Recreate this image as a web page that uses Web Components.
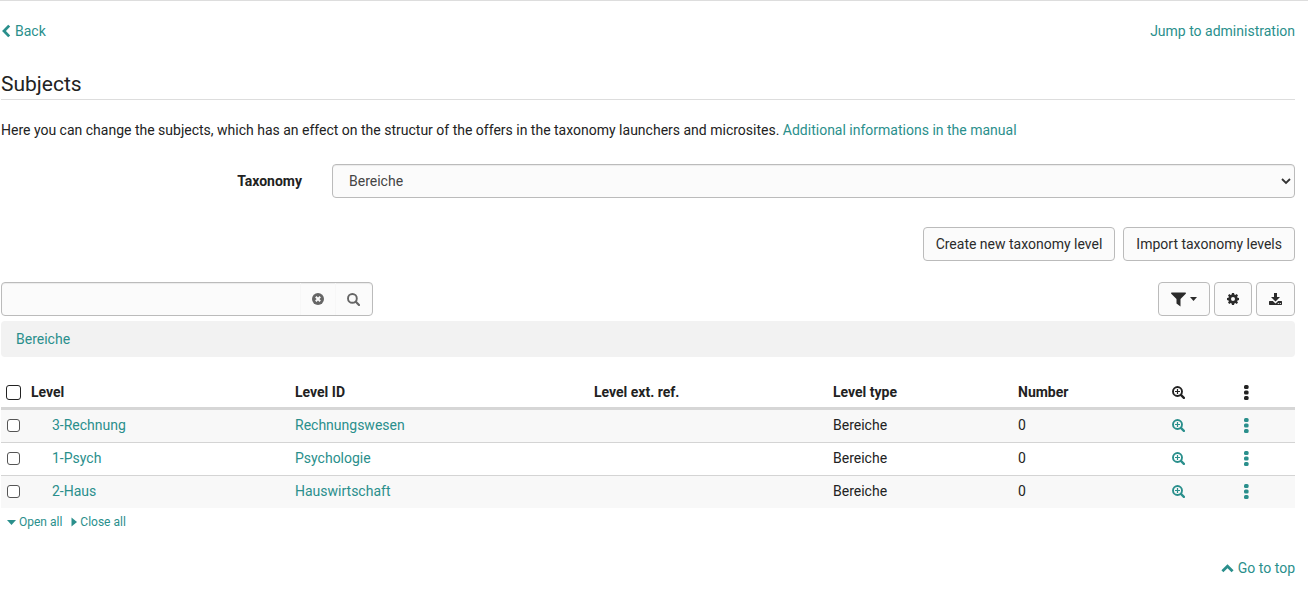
<!DOCTYPE html>
<html lang="en">
<head>
<meta charset="utf-8">
<meta name="viewport" content="width=device-width, initial-scale=1">
<title>Subjects</title>
<style>
  :root { --link: #2a8f8c; --text: #222; --line: #ddd; --control-line: #bbb; --control-bg: #fbfbfb; }
  body { margin: 0; background: #fff; color: var(--text); font: 14px/20px Roboto, "Liberation Sans", sans-serif; }
</style>
</head>
<body>
<subjects-page></subjects-page>

<script>
const define = (name, html, setup) => {
  const template = document.createElement('template');
  template.innerHTML = html;
  customElements.define(name, class extends HTMLElement {
    constructor() {
      super();
      this.attachShadow({ mode: 'open' }).append(template.content.cloneNode(true));
    }
    connectedCallback() { if (setup) setup(this, this.shadowRoot); }
  });
};

const icons = {
  back: [10, 14, '<path d="M8.2 1.6 3 7l5.2 5.4" fill="none" stroke="currentColor" stroke-width="2.8"/>'],
  up: [13, 14, '<path d="M1.4 10.2 6.5 5.2l5.1 5" fill="none" stroke="currentColor" stroke-width="2.8"/>'],
  down: [9, 10, '<path d="M0 3h9L4.5 8z"/>'],
  right: [6, 10, '<path d="M.5.5 6 5 .5 9.5z"/>'],
  clear: [12, 12, '<circle cx="6" cy="6" r="6"/><path d="m3.8 3.8 4.4 4.4m0-4.400L3.8 8.2" stroke="#fbfbfb" stroke-width="2"/>'],
  search: [13, 13, '<g fill="none" stroke="currentColor"><circle cx="5.4" cy="5.4" r="4.4" stroke-width="1.9"/><path d="m8.8 8.8 3.2 3.2" stroke-width="2.2" stroke-linecap="round"/></g>'],
  zoom: [13, 13, '<g fill="none" stroke="currentColor"><circle cx="5.5" cy="5.5" r="4.5" stroke-width="1.9"/><path d="m8.9 8.9 3 3" stroke-width="2.3" stroke-linecap="round"/><path d="M5.5 3v5M3 5.5h5" stroke-width="1.2"/></g>'],
  filter: [15, 15, '<path d="M.4.5h14.2L15 1.4 9.5 7v7.6L5.500 11.500V7L0 1.4z"/>'],
  caret: [7, 4, '<path d="M0 0h7L3.5 4z"/>'],
  gear: [12, 12, '<path fill-rule="evenodd" d="M5 0h2l.4 1.600.9.400L9.700 1.100l1.300 1.300-.9 1.400.4.900L12 5v2l-1.500.4-.4.900.9 1.300-1.300 1.400-1.400-.9-.9.400L7 12H5l-.4-1.500-.9-.4-1.400.9L1 9.600l.9-1.300-.4-.9L0 7V5l1.500-.3.400-.9L1 2.400l1.300-1.300 1.400.9.900-.4zM6 4a2 2 0 1 0 0 4 2 2 0 0 0 0-4z"/>'],
  download: [13, 12, '<path fill-rule="evenodd" d="M5 0h3v4h3L6.500 8.500 2 4h3zM.5 8h3.300l2.700 2.400L9.200 8h3.300l.5.500v3l-.5.500H.5l-.5-.5v-3zm8.300 2v1h1v-1zm2 0v1h1v-1z"/>'],
  menu: [6, 15, '<rect x="1" width="4.600" height="4" rx="1.500"/><rect x="1" y="5.500" width="4.600" height="4" rx="1.500"/><rect x="1" y="11" width="4.600" height="4" rx="1.500"/>']
};
define('ui-icon', `
  <style>:host { display: inline-flex; flex: none } svg { display: block; fill: currentColor }</style>
  <svg aria-hidden="true"></svg>`,
  (host, root) => {
    const [w, h, shape] = icons[host.getAttribute('name')];
    const svg = root.querySelector('svg');
    svg.setAttribute('width', w);
    svg.setAttribute('height', h);
    svg.setAttribute('viewBox', `0 0 ${w} ${h}`);
    svg.innerHTML = shape;
  });

define('ui-link', `
  <style>
    :host { display: inline-flex }
    a { display: inline-flex; align-items: center; gap: var(--icon-gap, 4px); color: var(--link); text-decoration: none }
    a:hover { text-decoration: underline }
  </style>
  <a href="#"><slot></slot></a>`,
  (host, root) => {
    const label = host.getAttribute('label');
    if (label) root.querySelector('a').setAttribute('aria-label', label);
  });

define('ui-button', `
  <style>
    :host { display: inline-flex }
    button { display: inline-flex; align-items: center; justify-content: center; gap: 4px; height: 34px; padding: 0 12px;
      border: 1px solid var(--control-line); border-radius: 4px; background: var(--control-bg); color: #2b2b2b; font: inherit; cursor: pointer }
  </style>
  <button type="button"><slot></slot></button>`,
  (host, root) => {
    const label = host.getAttribute('label');
    if (label) root.querySelector('button').setAttribute('aria-label', label);
  });

define('taxonomy-picker', `
  <style>
    :host { display: grid; grid-template-columns: 301px 1fr; column-gap: 30px; align-items: center }
    label { font-weight: 700; text-align: right }
    div { position: relative; display: flex }
    select { appearance: none; width: 100%; height: 34px; padding: 0 28px 0 16px; border: 1px solid var(--control-line); border-radius: 4px;
      background: var(--control-bg); color: #444; font: inherit; box-shadow: inset 0 1px 1px #0001 }
    svg { position: absolute; right: 4px; top: 14px; pointer-events: none }
  </style>
  <label for="taxonomy">Taxonomy</label>
  <div>
    <select id="taxonomy"><option>Bereiche</option></select>
    <svg width="10" height="7" viewBox="0 0 10 7" aria-hidden="true"><path d="m1 1 4 4 4-4" fill="none" stroke="#333" stroke-width="1.8"/></svg>
  </div>`);

define('search-box', `
  <style>
    :host { display: block }
    form { display: flex; box-sizing: border-box; width: 372px; height: 34px; border: 1px solid var(--control-line); border-radius: 4px; background: var(--control-bg); overflow: hidden; box-shadow: inset 0 1px 1px #0001 }
    input { flex: 1; min-width: 0; padding: 0 12px; border: 0; background: none; font: inherit; outline: 0 }
    button { display: flex; align-items: center; justify-content: center; width: 35px; padding: 0; border: 0; border-left: 1px solid #f7f7f7; background: none; color: #666 }
    button:last-child { width: 37px; padding-right: 2px }
  </style>
  <form>
    <input type="text" aria-label="Search">
    <button type="button" aria-label="Clear"><ui-icon name="clear"></ui-icon></button>
    <button type="button" aria-label="Start search"><ui-icon name="search"></ui-icon></button>
  </form>`);

const rows = [['3-Rechnung', 'Rechnungswesen'], ['1-Psych', 'Psychologie'], ['2-Haus', 'Hauswirtschaft']];
define('level-table', `
  <style>
    :host { display: block }
    table { width: 100%; table-layout: fixed; border-collapse: separate; border-spacing: 0 }
    th, td { text-align: left; height: 20px; vertical-align: middle; white-space: nowrap }
    th { padding: 7px 8px 5px; border-bottom: 3px solid #d6d6d6; font-weight: 700 }
    td { padding: 5px 8px 7px }
    tr + tr td { border-top: 1px solid #d4d4d4 }
    tbody tr:nth-child(odd) { background: #f8f8f8 }
    td:nth-child(2) { padding-left: 29px }
    .pick { padding-left: 0; padding-right: 0 }
    .pick input { appearance: none; display: block; box-sizing: border-box; width: 13px; height: 13px; margin: 0 6px; border: 1px solid #555; border-radius: 3px; background: #fff }
    th.pick input { width: 15px; height: 15px; margin: 0 5px; border-color: #222 }
    .pick input:checked { background: var(--link) }
    ui-icon, ui-link { display: flex }
    /* Relative weights: the fixed layout shares the table's width in these proportions. */
    .check { width: 22px } .level { width: 264px } .id { width: 299px } .ref { width: 239px }
    .type { width: 185px } .number { width: 154px } .zoom { width: 71px } .menu { width: 60px }
  </style>
  <table>
    <colgroup><col class="check"><col class="level"><col class="id"><col class="ref"><col class="type"><col class="number"><col class="zoom"><col class="menu"></colgroup>
    <thead><tr>
      <th class="pick"><input type="checkbox" aria-label="Select all"></th>
      <th>Level</th><th>Level ID</th><th>Level ext. ref.</th><th>Level type</th><th>Number</th>
      <th aria-label="Details"><ui-icon name="zoom"></ui-icon></th><th aria-label="Actions"><ui-icon name="menu"></ui-icon></th>
    </tr></thead>
    <tbody>${rows.map(([level, id]) => `<tr>
      <td class="pick"><input type="checkbox" aria-label="Select ${level}"></td>
      <td><ui-link>${level}</ui-link></td><td><ui-link>${id}</ui-link></td><td></td><td>Bereiche</td><td>0</td>
      <td><ui-link label="Details"><ui-icon name="zoom"></ui-icon></ui-link></td>
      <td><ui-link label="Actions"><ui-icon name="menu"></ui-icon></ui-link></td></tr>`).join('')}
    </tbody>
  </table>`);

define('subjects-page', `
  <style>
    :host { display: block; border-top: 1px solid #ddd; padding: 20px 13px 29px 1px }
    .bar { display: flex; justify-content: space-between; align-items: center }
    h1 { margin: 29px 0 20px; padding-bottom: 1px; border-bottom: 1px solid var(--line); font-size: 21px; line-height: 28px; font-weight: 400 }
    p { margin: 0 0 24px }
    .actions { display: flex; justify-content: flex-end; gap: 8px; margin: 29px 0 21px }
    .tools { display: flex; gap: 4px }
    .crumbs { margin: 5px 0 18px; padding: 8px 15px; border-radius: 4px; background: #f2f2f2 }
    .tree { --icon-gap: 3px; display: flex; gap: 9px; margin: 4px 6px 0; font-size: 12px }
    .top { display: flex; justify-content: flex-end; margin-top: 26px }
  </style>
  <nav class="bar">
    <ui-link><ui-icon name="back"></ui-icon>Back</ui-link>
    <ui-link>Jump to administration</ui-link>
  </nav>
  <h1>Subjects</h1>
  <p>Here you can change the subjects, which has an effect on the structur of the offers in the taxonomy launchers and microsites. <ui-link>Additional informations in the manual</ui-link></p>
  <taxonomy-picker></taxonomy-picker>
  <div class="actions"><ui-button>Create new taxonomy level</ui-button><ui-button>Import taxonomy levels</ui-button></div>
  <div class="bar">
    <search-box></search-box>
    <div class="tools">
      <ui-button label="Filter"><ui-icon name="filter"></ui-icon><ui-icon name="caret"></ui-icon></ui-button>
      <ui-button label="Settings"><ui-icon name="gear"></ui-icon></ui-button>
      <ui-button label="Download"><ui-icon name="download"></ui-icon></ui-button>
    </div>
  </div>
  <nav class="crumbs"><ui-link>Bereiche</ui-link></nav>
  <level-table></level-table>
  <div class="tree">
    <ui-link><ui-icon name="down"></ui-icon>Open all</ui-link>
    <ui-link><ui-icon name="right"></ui-icon>Close all</ui-link>
  </div>
  <div class="top"><ui-link><ui-icon name="up"></ui-icon>Go to top</ui-link></div>`);
</script>
</body>
</html>
